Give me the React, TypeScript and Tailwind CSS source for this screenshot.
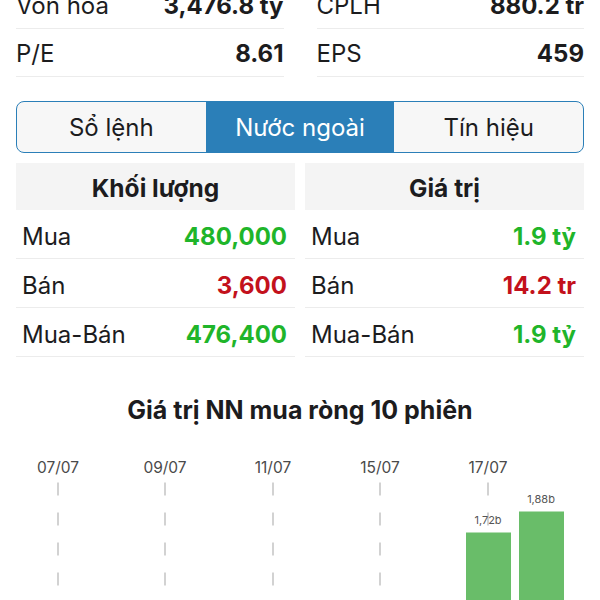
import React from 'react';

const font = { fontFamily: 'Inter, "Noto Sans", sans-serif' };

function StatRow({ label, value }: { label: string; value: string }) {
    return (
        <div className="flex h-12 items-center justify-between border-b border-[#ececec] pt-0.5 text-[24px] text-[#1c1c1e]">
            <span>{label}</span>
            <span className="font-bold">{value}</span>
        </div>
    );
}

type Row = { label: string; value: string; up: boolean };

function FlowTable({ title, rows }: { title: string; rows: Row[] }) {
    return (
        <div className="flex flex-col">
            <div className="flex h-[47px] items-center justify-center bg-[#f4f4f4] pt-1 text-[24.5px] font-bold text-[#1c1c1e]">{title}</div>
            {rows.map((r) => (
                <div key={r.label} className="flex h-[49px] items-center justify-between border-b border-[#ececec] pt-[5px] pr-2 pl-1.5 text-[24px]">
                    <span className="text-[#1c1c1e]">{r.label}</span>
                    <span className={`font-bold ${r.up ? 'text-[#1fb52a]' : 'text-[#c3111c]'}`}>{r.value}</span>
                </div>
            ))}
        </div>
    );
}

function Chart() {
    const dates = [
        { x: 58, d: '07/07' },
        { x: 165, d: '09/07' },
        { x: 273, d: '11/07' },
        { x: 380, d: '15/07' },
        { x: 488, d: '17/07' },
    ];
    return (
        <svg width="600" height="152" viewBox="0 0 600 152" className="block">
            {dates.map((t) => (
                <g key={t.d}>
                    <text x={t.x} y={23} textAnchor="middle" fontSize="15.5" fill="#4a4a4a" style={font}>
                        {t.d}
                    </text>
                    <line x1={t.x} y1={32.5} x2={t.x} y2={152} stroke="#b5b5b5" strokeWidth="1.2" strokeDasharray="13 17" />
                </g>
            ))}
            <rect x="466" y="82.5" width="45" height="70" fill="#69bd69" />
            <rect x="519" y="61.5" width="45" height="91" fill="#69bd69" />
            <text x="488" y="73.5" textAnchor="middle" fontSize="11" fill="#555" style={font}>
                1,72b
            </text>
            <text x="541" y="52.5" textAnchor="middle" fontSize="11" fill="#555" style={font}>
                1,88b
            </text>
        </svg>
    );
}

export default function App() {
    const tabs = ['Sổ lệnh', 'Nước ngoài', 'Tín hiệu'];
    return (
        <div className="h-[600px] w-[600px] overflow-hidden bg-white" style={font}>
            <div className="-mt-[19px] grid grid-cols-2 gap-x-[33px] px-4">
                <div>
                    <StatRow label="Vốn hóa" value="3,476.8 tỷ" />
                    <StatRow label="P/E" value="8.61" />
                </div>
                <div>
                    <StatRow label="CPLH" value="880.2 tr" />
                    <StatRow label="EPS" value="459" />
                </div>
            </div>

            <div className="mx-4 mt-6 flex h-[52px] overflow-hidden rounded-lg border-[1.5px] border-[#2b7fb8] bg-[#f7f7f7]">
                {tabs.map((t, i) => (
                    <div
                        key={t}
                        className={`flex flex-1 items-center justify-center pt-0.5 text-[24px] ${i === 1 ? 'bg-[#2b7fb8] text-white' : 'text-[#1c1c1e]'}`}
                    >
                        {t}
                    </div>
                ))}
            </div>

            <div className="mt-[10px] grid grid-cols-2 gap-x-[10px] px-4">
                <FlowTable
                    title="Khối lượng"
                    rows={[
                        { label: 'Mua', value: '480,000', up: true },
                        { label: 'Bán', value: '3,600', up: false },
                        { label: 'Mua-Bán', value: '476,400', up: true },
                    ]}
                />
                <FlowTable
                    title="Giá trị"
                    rows={[
                        { label: 'Mua', value: '1.9 tỷ', up: true },
                        { label: 'Bán', value: '14.2 tr', up: false },
                        { label: 'Mua-Bán', value: '1.9 tỷ', up: true },
                    ]}
                />
            </div>

            <div className="mt-[35px] text-center text-[25px] font-bold text-[#1c1c1e]">Giá trị NN mua ròng 10 phiên</div>

            <div className="mt-[20px]">
                <Chart />
            </div>
        </div>
    );
}
